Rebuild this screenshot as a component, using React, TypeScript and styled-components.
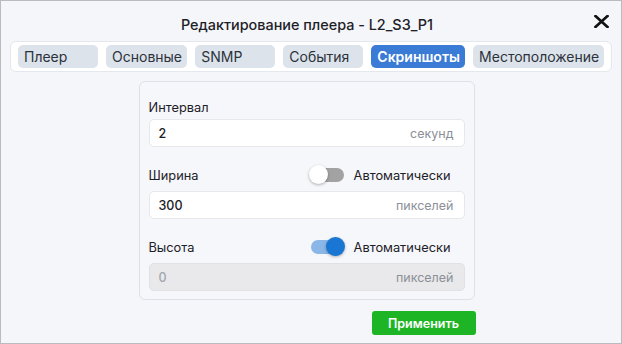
import React from 'react';
import styled, { createGlobalStyle } from 'styled-components';

const GlobalStyle = createGlobalStyle`
  html, body {
    margin: 0;
    padding: 0;
    background: #ffffff;
  }
  * {
    box-sizing: border-box;
  }
`;

const Dialog = styled.div`
  width: 622px;
  height: 344px;
  border: 1px solid #b9bbbf;
  background: #f5f6fa;
  font-family: Inter, "Noto Sans", sans-serif;
  color: #1d2127;
  display: flex;
  flex-direction: column;
`;

const Header = styled.div`
  display: grid;
  grid-template-columns: 1fr auto 1fr;
  align-items: start;
  padding: 14px 8px 0 0;
`;

const Title = styled.div`
  grid-column: 2;
  font-size: 14.4px;
  font-weight: 500;
  line-height: 20px;
  white-space: nowrap;
`;

const CloseButton = styled.button`
  grid-column: 3;
  justify-self: end;
  width: 20px;
  height: 20px;
  margin: -4px 2px 0 0;
  padding: 0;
  border: none;
  background: transparent;
  display: flex;
  align-items: center;
  justify-content: center;
  cursor: pointer;
`;

const TabBar = styled.div`
  margin: 6px 9px 0;
  display: flex;
  gap: 8px;
  padding: 3px 7px;
  background: #ffffff;
  border: 1px solid #e4e7ec;
  border-radius: 6px;
`;

const Tab = styled.div<{ $active?: boolean }>`
  min-width: 80px;
  height: 23px;
  line-height: 23px;
  padding: 0 6px;
  border-radius: 5px;
  font-size: 14px;
  font-weight: ${({ $active }) => ($active ? 600 : 400)};
  background: ${({ $active }) => ($active ? '#3a7bd5' : '#dde3ea')};
  color: ${({ $active }) => ($active ? '#ffffff' : '#2b323c')};
  white-space: nowrap;
  cursor: pointer;
`;

const Body = styled.div`
  display: flex;
  flex-direction: column;
  align-items: center;
  padding: 9px 9px 0 0;
`;

const Card = styled.div`
  width: 336px;
  padding: 15px 9px 8px;
  border: 1px solid #dde1e7;
  border-radius: 6px;
  background: #f6f7fb;
  display: flex;
  flex-direction: column;
`;

const Group = styled.div<{ $first?: boolean }>`
  display: flex;
  flex-direction: column;
  margin-top: ${({ $first }) => ($first ? '0' : '14px')};
`;

const LabelRow = styled.div<{ $tall?: boolean }>`
  display: flex;
  align-items: center;
  justify-content: space-between;
  height: ${({ $tall }) => ($tall ? '28px' : '20px')};
  margin-bottom: 2px;
  padding-right: 14px;
  font-size: 12.8px;
`;

const AutoGroup = styled.label`
  display: flex;
  align-items: center;
  gap: 10px;
  font-size: 12.8px;
`;

const SwitchTrack = styled.span<{ $on?: boolean }>`
  position: relative;
  width: 33px;
  height: 14px;
  border-radius: 7px;
  background: ${({ $on }) => ($on ? '#8ab6e8' : '#a2a2a2')};
`;

const SwitchThumb = styled.span<{ $on?: boolean }>`
  position: absolute;
  top: -3px;
  left: ${({ $on }) => ($on ? '15px' : '-2px')};
  width: 19px;
  height: 19px;
  border-radius: 50%;
  background: ${({ $on }) => ($on ? '#1976d2' : '#ffffff')};
  box-shadow: 0 1px 3px rgba(0, 0, 0, 0.3);
`;

const Field = styled.div<{ $disabled?: boolean }>`
  display: flex;
  align-items: center;
  height: 28px;
  padding: 0 10px 0 9px;
  border: 1px solid ${({ $disabled }) => ($disabled ? '#e0e1e4' : '#e6e8ec')};
  border-radius: 5px;
  background: ${({ $disabled }) => ($disabled ? '#e9e9eb' : '#ffffff')};
`;

const FieldValue = styled.span<{ $disabled?: boolean }>`
  flex: 1;
  font-size: 12.5px;
  font-weight: 500;
  color: ${({ $disabled }) => ($disabled ? '#a3a7ad' : '#1d2127')};
`;

const FieldSuffix = styled.span`
  font-size: 12.5px;
  color: #8b9098;
`;

const Footer = styled.div`
  width: 338px;
  display: flex;
  justify-content: flex-end;
  margin-top: 11px;
`;

const ApplyButton = styled.button`
  width: 104px;
  height: 24px;
  border: none;
  border-radius: 3px;
  background: #1db526;
  color: #ffffff;
  font-family: Inter, "Noto Sans", sans-serif;
  font-size: 12.5px;
  font-weight: 600;
  cursor: pointer;
`;

const Switch: React.FC<{ on?: boolean }> = ({ on }) => (
  <SwitchTrack $on={on}>
    <SwitchThumb $on={on} />
  </SwitchTrack>
);

const tabs = ['Плеер', 'Основные', 'SNMP', 'События', 'Скриншоты', 'Местоположение'];

export default function App() {
  return (
    <>
      <GlobalStyle />
      <Dialog>
        <Header>
          <Title>Редактирование плеера - L2_S3_P1</Title>
          <CloseButton aria-label="Закрыть">
            <svg width="15" height="13" viewBox="0 0 15 13">
              <path d="M1.5 1 L13.5 12 M13.5 1 L1.5 12" stroke="#111" strokeWidth="2.6" strokeLinecap="square" />
            </svg>
          </CloseButton>
        </Header>
        <TabBar>
          {tabs.map(t => (
            <Tab key={t} $active={t === 'Скриншоты'}>{t}</Tab>
          ))}
        </TabBar>
        <Body>
          <Card>
            <Group $first>
              <LabelRow>Интервал</LabelRow>
              <Field>
                <FieldValue>2</FieldValue>
                <FieldSuffix>секунд</FieldSuffix>
              </Field>
            </Group>
            <Group>
              <LabelRow $tall>
                <span>Ширина</span>
                <AutoGroup>
                  <Switch />
                  Автоматически
                </AutoGroup>
              </LabelRow>
              <Field>
                <FieldValue>300</FieldValue>
                <FieldSuffix>пикселей</FieldSuffix>
              </Field>
            </Group>
            <Group>
              <LabelRow $tall>
                <span>Высота</span>
                <AutoGroup>
                  <Switch on />
                  Автоматически
                </AutoGroup>
              </LabelRow>
              <Field $disabled>
                <FieldValue $disabled>0</FieldValue>
                <FieldSuffix>пикселей</FieldSuffix>
              </Field>
            </Group>
          </Card>
          <Footer>
            <ApplyButton>Применить</ApplyButton>
          </Footer>
        </Body>
      </Dialog>
    </>
  );
}
